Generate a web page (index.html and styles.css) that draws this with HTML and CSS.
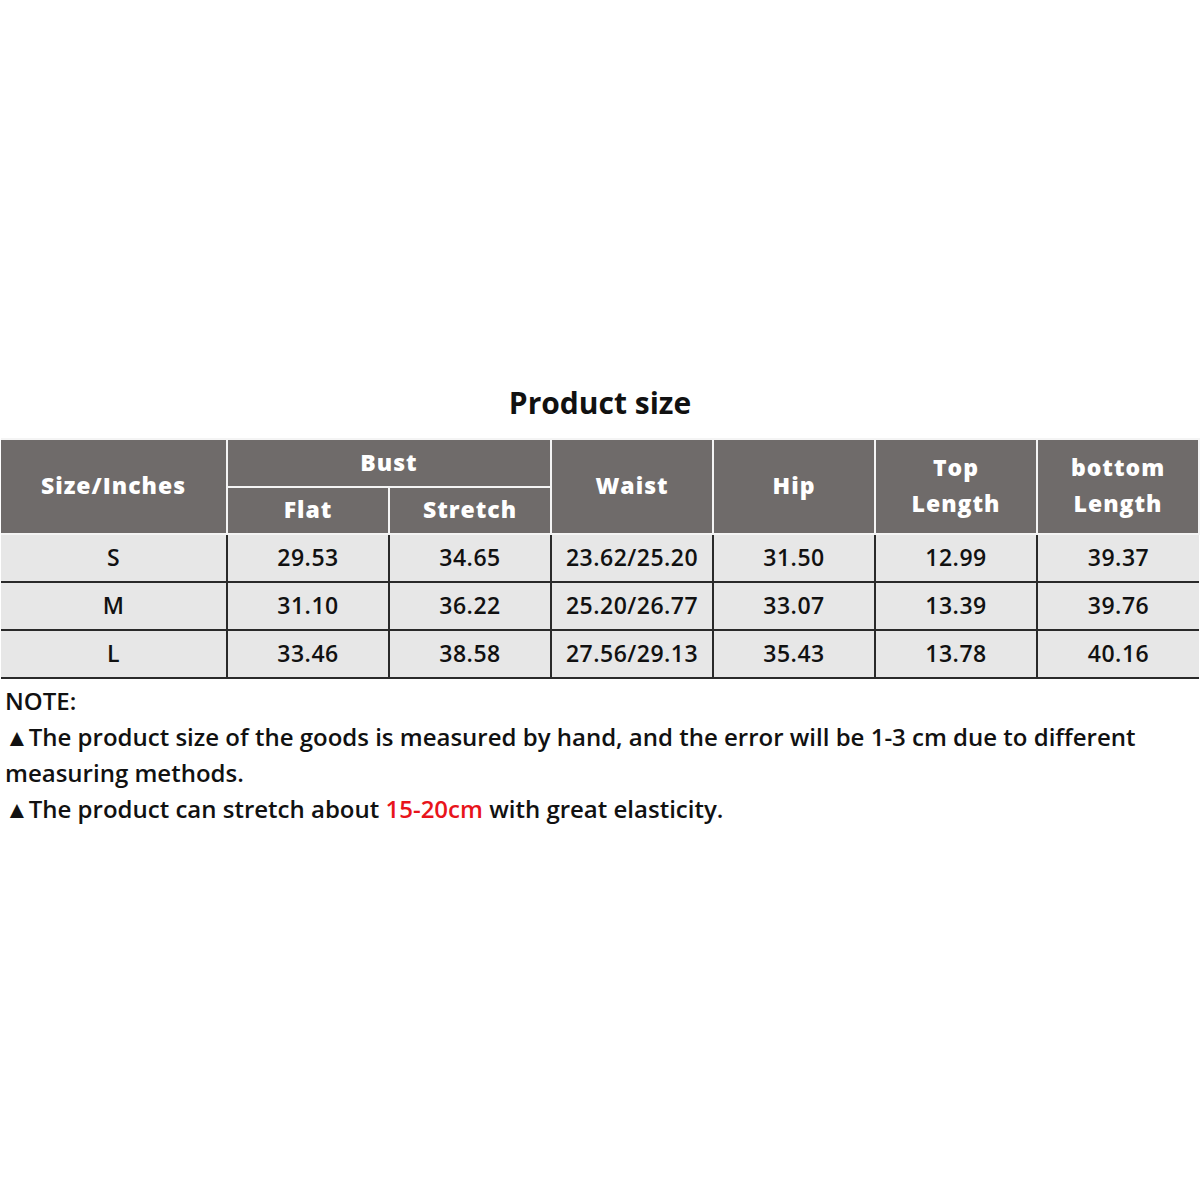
FILE: index.html
```html
<!DOCTYPE html>
<html>
<head>
<meta charset="utf-8">
<link rel="stylesheet" href="styles.css">
</head>
<body>
<div class="page">
  <h1 class="title">Product size</h1>
  <table class="size-table">
    <colgroup>
      <col class="c-first">
      <col class="c-num"><col class="c-num"><col class="c-num"><col class="c-num"><col class="c-num"><col class="c-num">
    </colgroup>
    <thead>
      <tr class="h1">
        <th rowspan="2">Size/Inches</th>
        <th colspan="2">Bust</th>
        <th rowspan="2">Waist</th>
        <th rowspan="2">Hip</th>
        <th rowspan="2" class="two">Top<br>Length</th>
        <th rowspan="2" class="two">bottom<br>Length</th>
      </tr>
      <tr class="h2">
        <th>Flat</th>
        <th>Stretch</th>
      </tr>
    </thead>
    <tbody>
      <tr><td>S</td><td>29.53</td><td>34.65</td><td>23.62/25.20</td><td>31.50</td><td>12.99</td><td>39.37</td></tr>
      <tr><td>M</td><td>31.10</td><td>36.22</td><td>25.20/26.77</td><td>33.07</td><td>13.39</td><td>39.76</td></tr>
      <tr><td>L</td><td>33.46</td><td>38.58</td><td>27.56/29.13</td><td>35.43</td><td>13.78</td><td>40.16</td></tr>
    </tbody>
  </table>
  <div class="notes">
    <p>NOTE:</p>
    <p>▲The product size of the goods is measured by hand, and the error will be 1-3 cm due to different measuring methods.</p>
    <p>▲The product can stretch about <span class="red">15-20cm</span> with great elasticity.</p>
  </div>
</div>
</body>
</html>
```

FILE: styles.css
```css
html, body {
  margin: 0;
  padding: 0;
  background: #ffffff;
}
body {
  font-family: "Open Sans", "Noto Sans", sans-serif;
  color: #111;
}
.page {
  width: 1200px;
  height: 1200px;
  padding-top: 384px;
  box-sizing: border-box;
}
.title {
  margin: 0 0 16px 0;
  text-align: center;
  font-size: 30px;
  font-weight: 700;
  line-height: 38px;
  color: #111;
}
.size-table {
  margin-left: 1px;
  width: 1198px;
  border-collapse: collapse;
  table-layout: fixed;
}
.c-first { width: 226px; }
.c-num { width: 162px; }
th {
  background: #6f6b6a;
  color: #fff;
  font-weight: 800;
  font-size: 23px;
  border: 2px solid #f4f4f4;
  padding: 0 0 3px 0;
  text-align: center;
  letter-spacing: 1px;
}
.h1 th { height: 43px; }
.h2 th { height: 42px; }
th.two { line-height: 36px; }
td {
  background: #e7e7e7;
  border: 2px solid #2a2a2a;
  height: 44px;
  padding: 0 0 2px 0;
  text-align: center;
  font-size: 23px;
  font-weight: 600;
  color: #111;
  letter-spacing: 0.5px;
}
tbody tr td:first-child { border-left: none; }
tbody tr td:last-child { border-right: none; }
thead th:first-child { border-left: none; }
.notes {
  padding: 4px 0 0 5px;
  width: 1150px;
}
.notes p {
  margin: 0;
  font-size: 24px;
  line-height: 36px;
  font-weight: 600;
  color: #111;
}
.red { color: #e8141b; }
```
